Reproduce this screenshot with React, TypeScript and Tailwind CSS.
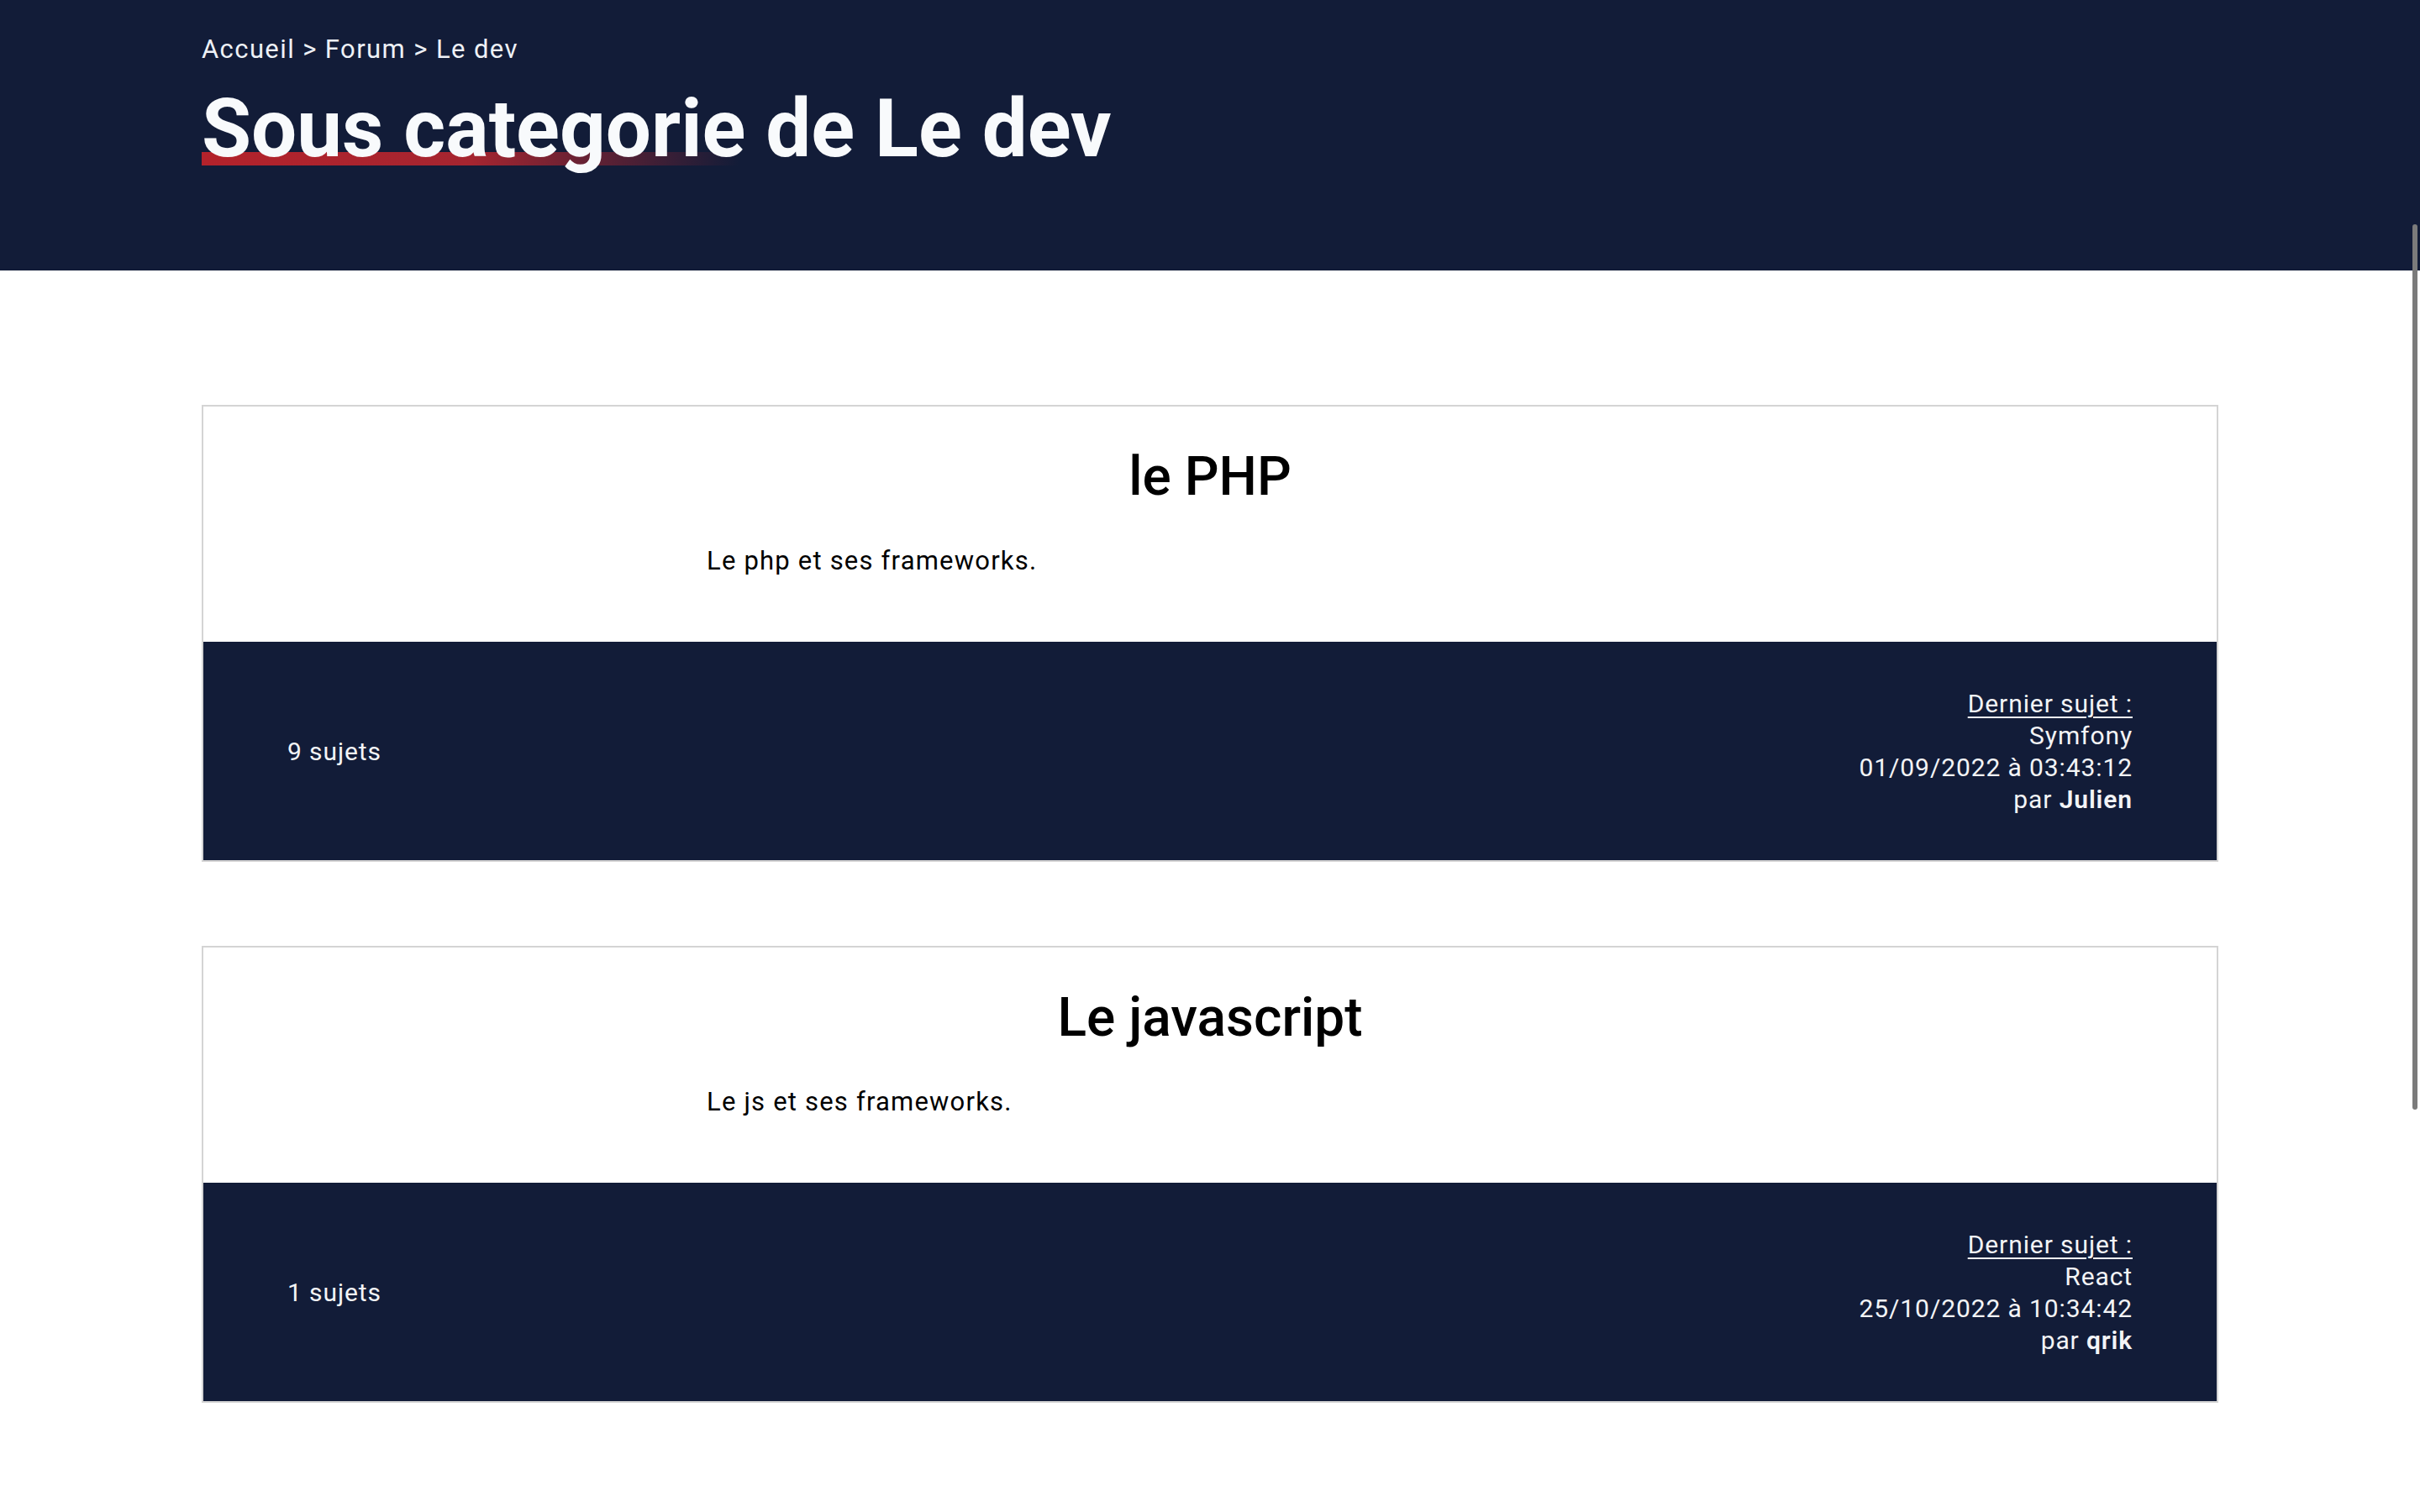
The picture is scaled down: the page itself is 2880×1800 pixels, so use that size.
import React from "react";

type SubCategory = {
  title: string;
  description: string;
  count: number;
  lastTopic: string;
  lastDate: string;
  lastAuthor: string;
};

const subCategories: SubCategory[] = [
  {
    title: "le PHP",
    description: "Le php et ses frameworks.",
    count: 9,
    lastTopic: "Symfony",
    lastDate: "01/09/2022 à 03:43:12",
    lastAuthor: "Julien",
  },
  {
    title: "Le javascript",
    description: "Le js et ses frameworks.",
    count: 1,
    lastTopic: "React",
    lastDate: "25/10/2022 à 10:34:42",
    lastAuthor: "qrik",
  },
];

function SubCategoryCard({ cat }: { cat: SubCategory }) {
  return (
    <div className="border-2 border-[#d4d4d4] bg-white">
      {/* Top part: title + description */}
      <div className="pt-[52px] pb-[78px]">
        <h2 className="text-center text-[64px] leading-none font-medium text-black">
          {cat.title}
        </h2>
        <p className="mx-auto mt-[50px] w-1/2 text-[31px] leading-[36px] tracking-[1.2px] text-black">
          {cat.description}
        </p>
      </div>

      {/* Bottom part: stats */}
      <div className="flex items-center justify-between bg-[#121c38] px-[100px] pt-[55px] pb-[53px] text-[30px] leading-[38px] tracking-[0.9px] text-[#f3f4f6]">
        <span>{cat.count} sujets</span>
        <div className="flex flex-col items-end text-right">
          <span className="underline underline-offset-[5px] decoration-[2px]">
            Dernier sujet :
          </span>
          <span>{cat.lastTopic}</span>
          <span>{cat.lastDate}</span>
          <span>
            par <strong className="font-semibold">{cat.lastAuthor}</strong>
          </span>
        </div>
      </div>
    </div>
  );
}

export default function App() {
  return (
    <div
      className="min-h-screen bg-white"
      style={{ fontFamily: "Roboto, 'Noto Sans', sans-serif" }}
    >
      {/* Header */}
      <header className="bg-[#121c38] pt-[41px] pb-[121px]">
        <div className="mx-auto w-[2400px]">
          <nav className="text-[31px] leading-[36px] tracking-[1.4px] text-[#eef1f6]">
            Accueil &gt; Forum &gt; Le dev
          </nav>
          <h1 className="relative mt-[28px] inline-block text-8xl leading-none font-bold text-[#f8fafc]">
            <span className="absolute bottom-[4px] left-0 h-[16px] w-[640px] bg-gradient-to-r from-[#b3222b] via-[#a52530] to-transparent" />
            <span className="relative">Sous categorie de Le dev</span>
          </h1>
        </div>
      </header>

      {/* List */}
      <main className="mx-auto flex w-[2400px] flex-col gap-[100px] pt-[160px] pb-[100px]">
        {subCategories.map((cat) => (
          <SubCategoryCard key={cat.title} cat={cat} />
        ))}
      </main>

      {/* overlay scrollbar thumb */}
      <div className="fixed top-[267px] right-[3px] h-[1054px] w-[6px] rounded-full bg-[#7b7b7b]" />
    </div>
  );
}
